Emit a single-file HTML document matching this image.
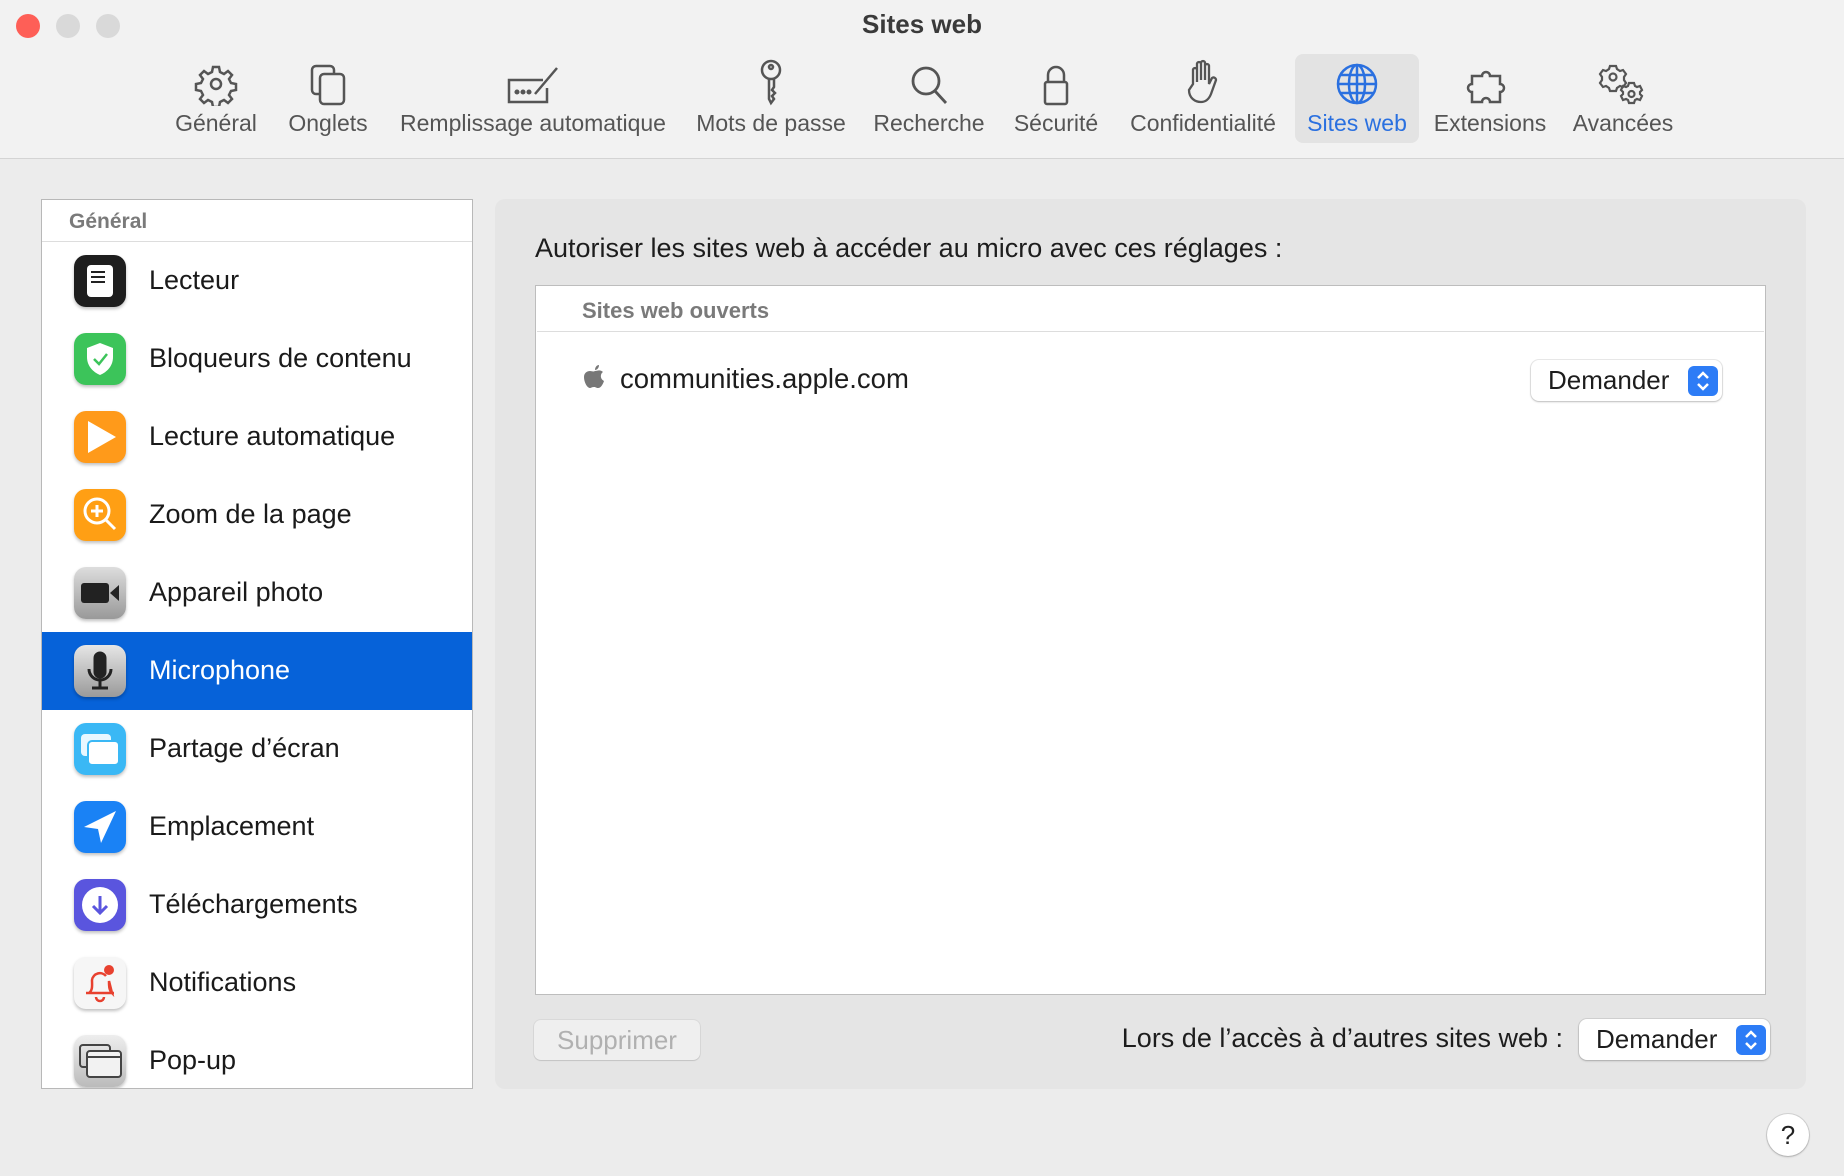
<!DOCTYPE html>
<html><head><meta charset="utf-8"><style>
*{margin:0;padding:0;box-sizing:border-box}
body{width:1844px;height:1176px;background:#ececec;font-family:"Liberation Sans",sans-serif;position:relative;overflow:hidden;color:#1d1d1d}
.a{position:absolute}
.top{left:0;top:0;width:1844px;height:159px;background:#f2f2f2;border-bottom:1px solid #d4d4d4}
.dot{width:24px;height:24px;border-radius:50%;top:14px}
.tb{top:54px;height:89px;text-align:center;font-size:23px;color:#555;white-space:nowrap}
.tb svg{position:absolute;left:50%;top:8px;transform:translateX(-50%)}
.tb span{position:absolute;left:0;right:0;top:56px}
.side{left:41px;top:199px;width:432px;height:890px;background:#fff;border:1.5px solid #b8b8b8;overflow:hidden}
.row{position:absolute;left:0;width:430px;height:78px;font-size:27px;color:#1a1a1a}
.row .ic{position:absolute;left:32px;top:13px;width:52px;height:52px;border-radius:12px;box-shadow:0 2px 3px rgba(0,0,0,.25);overflow:hidden}
.row .t{position:absolute;left:107px;top:23px}
.panel{left:495px;top:199px;width:1311px;height:890px;background:#e5e5e5;border-radius:10px}
.pop{background:#fff;border-radius:8px;box-shadow:0 0 0 1px rgba(0,0,0,.08),0 1px 2px rgba(0,0,0,.2);font-size:26px}
.arr{position:absolute;right:4px;top:6px;width:30px;height:30px;background:#2d7cf6;border-radius:6px}
</style></head><body>
<div class="a top"></div>
<div class="a dot" style="left:16px;background:#fe5f57"></div>
<div class="a dot" style="left:56px;background:#d9d9d9"></div>
<div class="a dot" style="left:96px;background:#d9d9d9"></div>
<div class="a" style="left:0;width:1844px;top:9px;text-align:center;font-size:26px;font-weight:bold;color:#3a3a3a">Sites web</div>

<div class="a" style="left:1295px;top:54px;width:124px;height:89px;background:#e3e3e3;border-radius:8px"></div>

<div class="a tb" style="left:166px;width:100px"><svg width="44" height="44" viewBox="0 0 44 44" fill="none" stroke="#555" stroke-width="2.5"><circle cx="22" cy="22" r="5"/><path d="M19 5h6l1 5 4 2 4-3 4 4-3 4 2 4 5 1v6l-5 1-2 4 3 4-4 4-4-3-4 2-1 5h-6l-1-5-4-2-4 3-4-4 3-4-2-4-5-1v-6l5-1 2-4-3-4 4-4 4 3 4-2z"/></svg><span>Général</span></div>
<div class="a tb" style="left:278px;width:100px"><svg width="44" height="44" viewBox="0 0 44 44" fill="none" stroke="#555" stroke-width="2.5"><rect x="6" y="4" width="22" height="28" rx="4"/><rect x="14" y="12" width="24" height="30" rx="4" fill="#f2f2f2"/></svg><span>Onglets</span></div>
<div class="a tb" style="left:393px;width:280px"><svg width="60" height="44" viewBox="0 0 60 44" fill="none" stroke="#555" stroke-width="2.5"><path d="M40 18H6v22h38V26"/><circle cx="14" cy="30" r="1.3" fill="#555"/><circle cx="20" cy="30" r="1.3" fill="#555"/><circle cx="26" cy="30" r="1.3" fill="#555"/><path d="M32 32l22-26"/></svg><span>Remplissage automatique</span></div>
<div class="a tb" style="left:691px;width:160px"><svg width="44" height="50" viewBox="0 0 44 50" fill="none" stroke="#555" stroke-width="2.5" style="top:4px"><circle cx="22" cy="12" r="9"/><circle cx="22" cy="9" r="2"/><path d="M20 21v20l2 4 3-4-2-3 3-3-3-3 2-3v-8"/></svg><span>Mots de passe</span></div>
<div class="a tb" style="left:869px;width:120px"><svg width="44" height="44" viewBox="0 0 44 44" fill="none" stroke="#555" stroke-width="2.8"><circle cx="19" cy="19" r="13"/><path d="M28 29l11 12"/></svg><span>Recherche</span></div>
<div class="a tb" style="left:1006px;width:100px"><svg width="44" height="44" viewBox="0 0 44 44" fill="none" stroke="#555" stroke-width="2.5"><path d="M14 20v-7a8 8 0 0 1 16 0v7"/><rect x="11" y="20" width="22" height="22" rx="2"/></svg><span>Sécurité</span></div>
<div class="a tb" style="left:1123px;width:160px"><svg width="44" height="48" viewBox="0 0 44 48" fill="none" stroke="#555" stroke-width="2.3" style="top:4px"><path d="M12 26V12a2 2 0 0 1 4 0v12V6a2 2 0 0 1 4 0v16V5a2 2 0 0 1 4 0v17V8a2 2 0 0 1 4 0v18l3-6a2.5 2.5 0 0 1 4 2l-5 14c-2 5-5 8-10 8-6 0-12-4-12-12z"/></svg><span>Confidentialité</span></div>
<div class="a tb" style="left:1296px;width:122px;color:#2a70e0"><svg width="44" height="44" viewBox="0 0 44 44" fill="none" stroke="#2a70e0" stroke-width="2.5"><circle cx="22" cy="22" r="19"/><ellipse cx="22" cy="22" rx="8" ry="19"/><path d="M22 3v38M3 22h38M6 13h32M6 31h32"/></svg><span>Sites web</span></div>
<div class="a tb" style="left:1430px;width:120px"><svg width="60" height="44" viewBox="0 0 60 44" fill="none" stroke="#555" stroke-width="2.5"><path d="M12 14h10a4 4 0 1 1 8 0h10v8a4 4 0 1 1 0 8v10H30a4 4 0 1 0-8 0H12V30a4 4 0 1 1 0-8z"/></svg><span>Extensions</span></div>
<div class="a tb" style="left:1568px;width:110px"><svg width="56" height="46" viewBox="0 0 56 46" fill="none" stroke="#555" stroke-width="2.2"><path d="M15 4h6l1 3 3 2 3-1 3 4-2 3v3l2 3-3 4-3-1-3 2-1 3h-6l-1-3-3-2-3 1-3-4 2-3v-3l-2-3 3-4 3 1 3-2z"/><circle cx="18" cy="15" r="3.5"/><path d="M34 21h5l1 3 2 1 3-1 2 4-2 2v2l2 2-2 4-3-1-2 1-1 3h-5l-1-3-2-1-3 1-2-4 2-2v-2l-2-2 2-4 3 1 2-1z"/><circle cx="36.5" cy="32" r="3"/></svg><span>Avancées</span></div>

<div class="a side">
<div class="a" style="left:0;top:0;width:430px;height:42px;border-bottom:1px solid #ddd;font-size:21px;font-weight:bold;color:#7a7a7a;padding:10px 0 0 27px">Général</div>
<div class="row" style="top:42px"><div class="ic" style="background:#1e1e1e"><div class="a" style="left:13px;top:10px;width:26px;height:32px;background:#fff;border-radius:4px"></div><div class="a" style="left:17px;top:16px;width:14px;height:2px;background:#222;box-shadow:0 5px 0 #222,0 10px 0 #222"></div></div><span class="t">Lecteur</span></div>
<div class="row" style="top:120px"><div class="ic" style="background:#3cc45a"><svg width="52" height="52"><path d="M26 10l13 5v9c0 9-6 15-13 18-7-3-13-9-13-18v-9z" fill="#fff"/><path d="M20 26l5 5 8-10" stroke="#3cc45a" stroke-width="2.5" fill="none"/></svg></div><span class="t">Bloqueurs de contenu</span></div>
<div class="row" style="top:198px"><div class="ic" style="background:#ff9a1a"><svg width="52" height="52"><path d="M14 10l28 16-28 16z" fill="#fff"/></svg></div><span class="t">Lecture automatique</span></div>
<div class="row" style="top:276px"><div class="ic" style="background:#ff9f14"><svg width="52" height="52" fill="none" stroke="#fff" stroke-width="3"><circle cx="23" cy="22" r="12"/><path d="M32 31l9 9M23 16v12M17 22h12"/></svg></div><span class="t">Zoom de la page</span></div>
<div class="row" style="top:354px"><div class="ic" style="background:linear-gradient(#ddd,#999)"><svg width="52" height="52"><rect x="7" y="16" width="28" height="20" rx="3" fill="#222"/><path d="M36 26l9-8v16z" fill="#222"/></svg></div><span class="t">Appareil photo</span></div>
<div class="row" style="top:432px;background:#0662d9;color:#fff"><div class="ic" style="background:linear-gradient(#e6e6e6,#9a9a9a)"><svg width="52" height="52" fill="none" stroke="#222" stroke-width="3"><rect x="21" y="8" width="10" height="24" rx="5" fill="#222"/><path d="M15 24a11 11 0 0 0 22 0M26 35v7M18 43h16"/></svg></div><span class="t">Microphone</span></div>
<div class="row" style="top:510px"><div class="ic" style="background:#3ab8f5"><svg width="52" height="52"><rect x="7" y="11" width="30" height="22" rx="4" fill="#e8f7ff"/><rect x="14" y="18" width="31" height="24" rx="4" fill="#fff" stroke="#3ab8f5" stroke-width="2"/></svg></div><span class="t">Partage d’écran</span></div>
<div class="row" style="top:588px"><div class="ic" style="background:#1a82f5"><svg width="52" height="52"><path d="M42 10L10 26l14 2 3 14z" fill="#fff"/></svg></div><span class="t">Emplacement</span></div>
<div class="row" style="top:666px"><div class="ic" style="background:#5a55de"><svg width="52" height="52"><circle cx="26" cy="26" r="18" fill="#fff"/><path d="M26 17v17M19 27l7 7 7-7" stroke="#5a55de" stroke-width="3" fill="none"/></svg></div><span class="t">Téléchargements</span></div>
<div class="row" style="top:744px"><div class="ic" style="background:#f6f6f6"><svg width="52" height="52" fill="none" stroke="#e8412f" stroke-width="2.5"><path d="M15 36c4-3 3-8 3-13a8 8 0 0 1 14-4M35 24c0 5 0 9 3 12zM12 36h28M22 40a4 4 0 0 0 8 0"/><circle cx="35" cy="13" r="5" fill="#e8412f" stroke="none"/></svg></div><span class="t">Notifications</span></div>
<div class="row" style="top:822px"><div class="ic" style="background:linear-gradient(#eee,#bbb)"><svg width="52" height="52" fill="none" stroke="#444" stroke-width="2"><rect x="6" y="10" width="30" height="22" rx="3"/><rect x="13" y="16" width="34" height="26" rx="3" fill="#f2f2f2"/><path d="M13 22h34"/></svg></div><span class="t">Pop-up</span></div>
</div>

<div class="a panel"></div>
<div class="a" style="left:535px;top:233px;font-size:27px;color:#1d1d1d">Autoriser les sites web à accéder au micro avec ces réglages :</div>
<div class="a" style="left:535px;top:285px;width:1231px;height:710px;background:#fff;border:1.5px solid #bdbdbd"></div>
<div class="a" style="left:537px;top:331px;width:1227px;height:1px;background:#ddd"></div>
<div class="a" style="left:582px;top:298px;font-size:22px;font-weight:bold;color:#7a7a7a">Sites web ouverts</div>
<svg class="a" style="left:584px;top:364px" width="22" height="26" viewBox="0 0 22 26"><path d="M11 7c2-0 5-2 8 1-3 2-3 7 1 9-1 3-3 7-6 7-2 0-2-1-4-1s-3 1-4 1C3 24 0 18 0 13c0-4 3-6 6-6 2 0 3 1 5 0zM11 6c0-3 2-5 4-5 0 3-2 5-4 5z" fill="#777"/></svg>
<div class="a" style="left:620px;top:363px;font-size:27.5px;color:#1d1d1d">communities.apple.com</div>
<div class="a pop" style="left:1531px;top:360px;width:191px;height:41px"><span class="a" style="left:17px;top:5px">Demander</span><div class="arr"><svg width="30" height="30" fill="none" stroke="#fff" stroke-width="2.5"><path d="M10 12l5-5 5 5M10 18l5 5 5-5"/></svg></div></div>

<div class="a" style="left:534px;top:1020px;width:166px;height:40px;background:#efefef;border-radius:7px;box-shadow:0 0 0 1px rgba(0,0,0,.05),0 1px 1px rgba(0,0,0,.1);font-size:26px;color:#b0b0b0;text-align:center;line-height:40px">Supprimer</div>
<div class="a" style="left:900px;width:663px;top:1023px;text-align:right;font-size:27px;color:#1d1d1d">Lors de l’accès à d’autres sites web :</div>
<div class="a pop" style="left:1579px;top:1019px;width:191px;height:41px"><span class="a" style="left:17px;top:5px">Demander</span><div class="arr"><svg width="30" height="30" fill="none" stroke="#fff" stroke-width="2.5"><path d="M10 12l5-5 5 5M10 18l5 5 5-5"/></svg></div></div>

<div class="a" style="left:1767px;top:1114px;width:42px;height:42px;border-radius:50%;background:#fff;box-shadow:0 0 0 1px rgba(0,0,0,.1),0 1px 2px rgba(0,0,0,.2);text-align:center;line-height:42px;font-size:26px;color:#222">?</div>
</body></html>
